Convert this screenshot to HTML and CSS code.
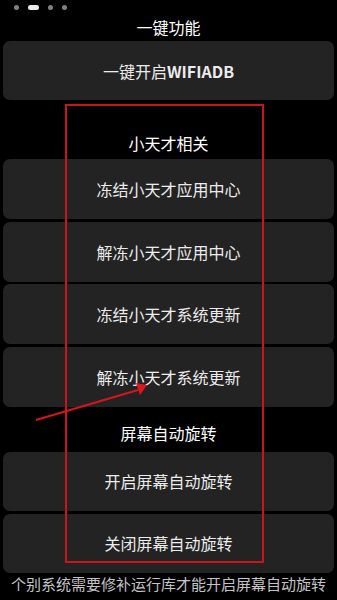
FILE: index.html
```html
<!DOCTYPE html>
<html lang="zh">
<head>
<meta charset="utf-8">
<link rel="stylesheet" href="styles.css">
</head>
<body>
<div class="page">
  <div class="pager">
    <span class="dot"></span>
    <span class="dot active"></span>
    <span class="dot"></span>
    <span class="dot"></span>
  </div>
  <div class="title top">一键功能</div>
  <div class="btn b1">一键开启<span class="latin">WIFIADB</span></div>
  <div class="title s1">小天才相关</div>
  <div class="group">
    <div class="btn">冻结小天才应用中心</div>
    <div class="btn">解冻小天才应用中心</div>
    <div class="btn">冻结小天才系统更新</div>
    <div class="btn">解冻小天才系统更新</div>
  </div>
  <div class="title s2">屏幕自动旋转</div>
  <div class="group g2">
    <div class="btn">开启屏幕自动旋转</div>
    <div class="btn">关闭屏幕自动旋转</div>
  </div>
  <div class="note">个别系统需要修补运行库才能开启屏幕自动旋转</div>

  <div class="redbox"></div>
  <svg class="arrow" width="337" height="600" viewBox="0 0 337 600">
    <line x1="36" y1="420" x2="138" y2="390" stroke="#d8141c" stroke-width="2"/>
    <polygon points="147,385 136,383 140,395" fill="#e0141c"/>
  </svg>
</div>
</body>
</html>
```
FILE: styles.css
```css
html, body {
  margin: 0;
  padding: 0;
  background: #000;
}
.page {
  position: relative;
  width: 337px;
  height: 600px;
  overflow: hidden;
  font-family: "Noto Sans CJK SC", "Noto Sans", sans-serif;
  color: #f2f2f2;
}
.pager {
  display: flex;
  align-items: center;
  gap: 9px;
  padding: 4px 0 0 14px;
  height: 7px;
}
.dot {
  width: 5px;
  height: 5px;
  border-radius: 50%;
  background: #808080;
}
.dot.active {
  width: 11px;
  border-radius: 3px;
  background: #ededed;
}
.title {
  text-align: center;
  font-size: 16px;
  color: #ffffff;
  line-height: 28px;
}
.title.top {
  height: 28px;
  padding-top: 2px;
}
.title.s1 {
  padding: 29px 0 2px;
}
.title.s2 {
  padding: 12px 0 5px;
}
.btn {
  margin: 0 3px;
  height: 60px;
  border-radius: 7px;
  background: #232323;
  display: flex;
  align-items: center;
  justify-content: center;
  font-size: 16px;
  color: #ececec;
}
.latin {
  font-weight: 700;
}
.btn.b1 {
  height: 59px;
}
.group {
  display: flex;
  flex-direction: column;
  gap: 2.5px;
}
.group.g2 .btn {
  height: 59px;
}
.group.g2 {
  gap: 3px;
}
.note {
  text-align: center;
  font-size: 15px;
  line-height: 22px;
  color: #c4c4c4;
  white-space: nowrap;
}
.redbox {
  position: absolute;
  left: 65px;
  top: 104px;
  width: 195px;
  height: 455px;
  border: 2px solid #c8161d;
}
.arrow {
  position: absolute;
  left: 0;
  top: 0;
}
```
